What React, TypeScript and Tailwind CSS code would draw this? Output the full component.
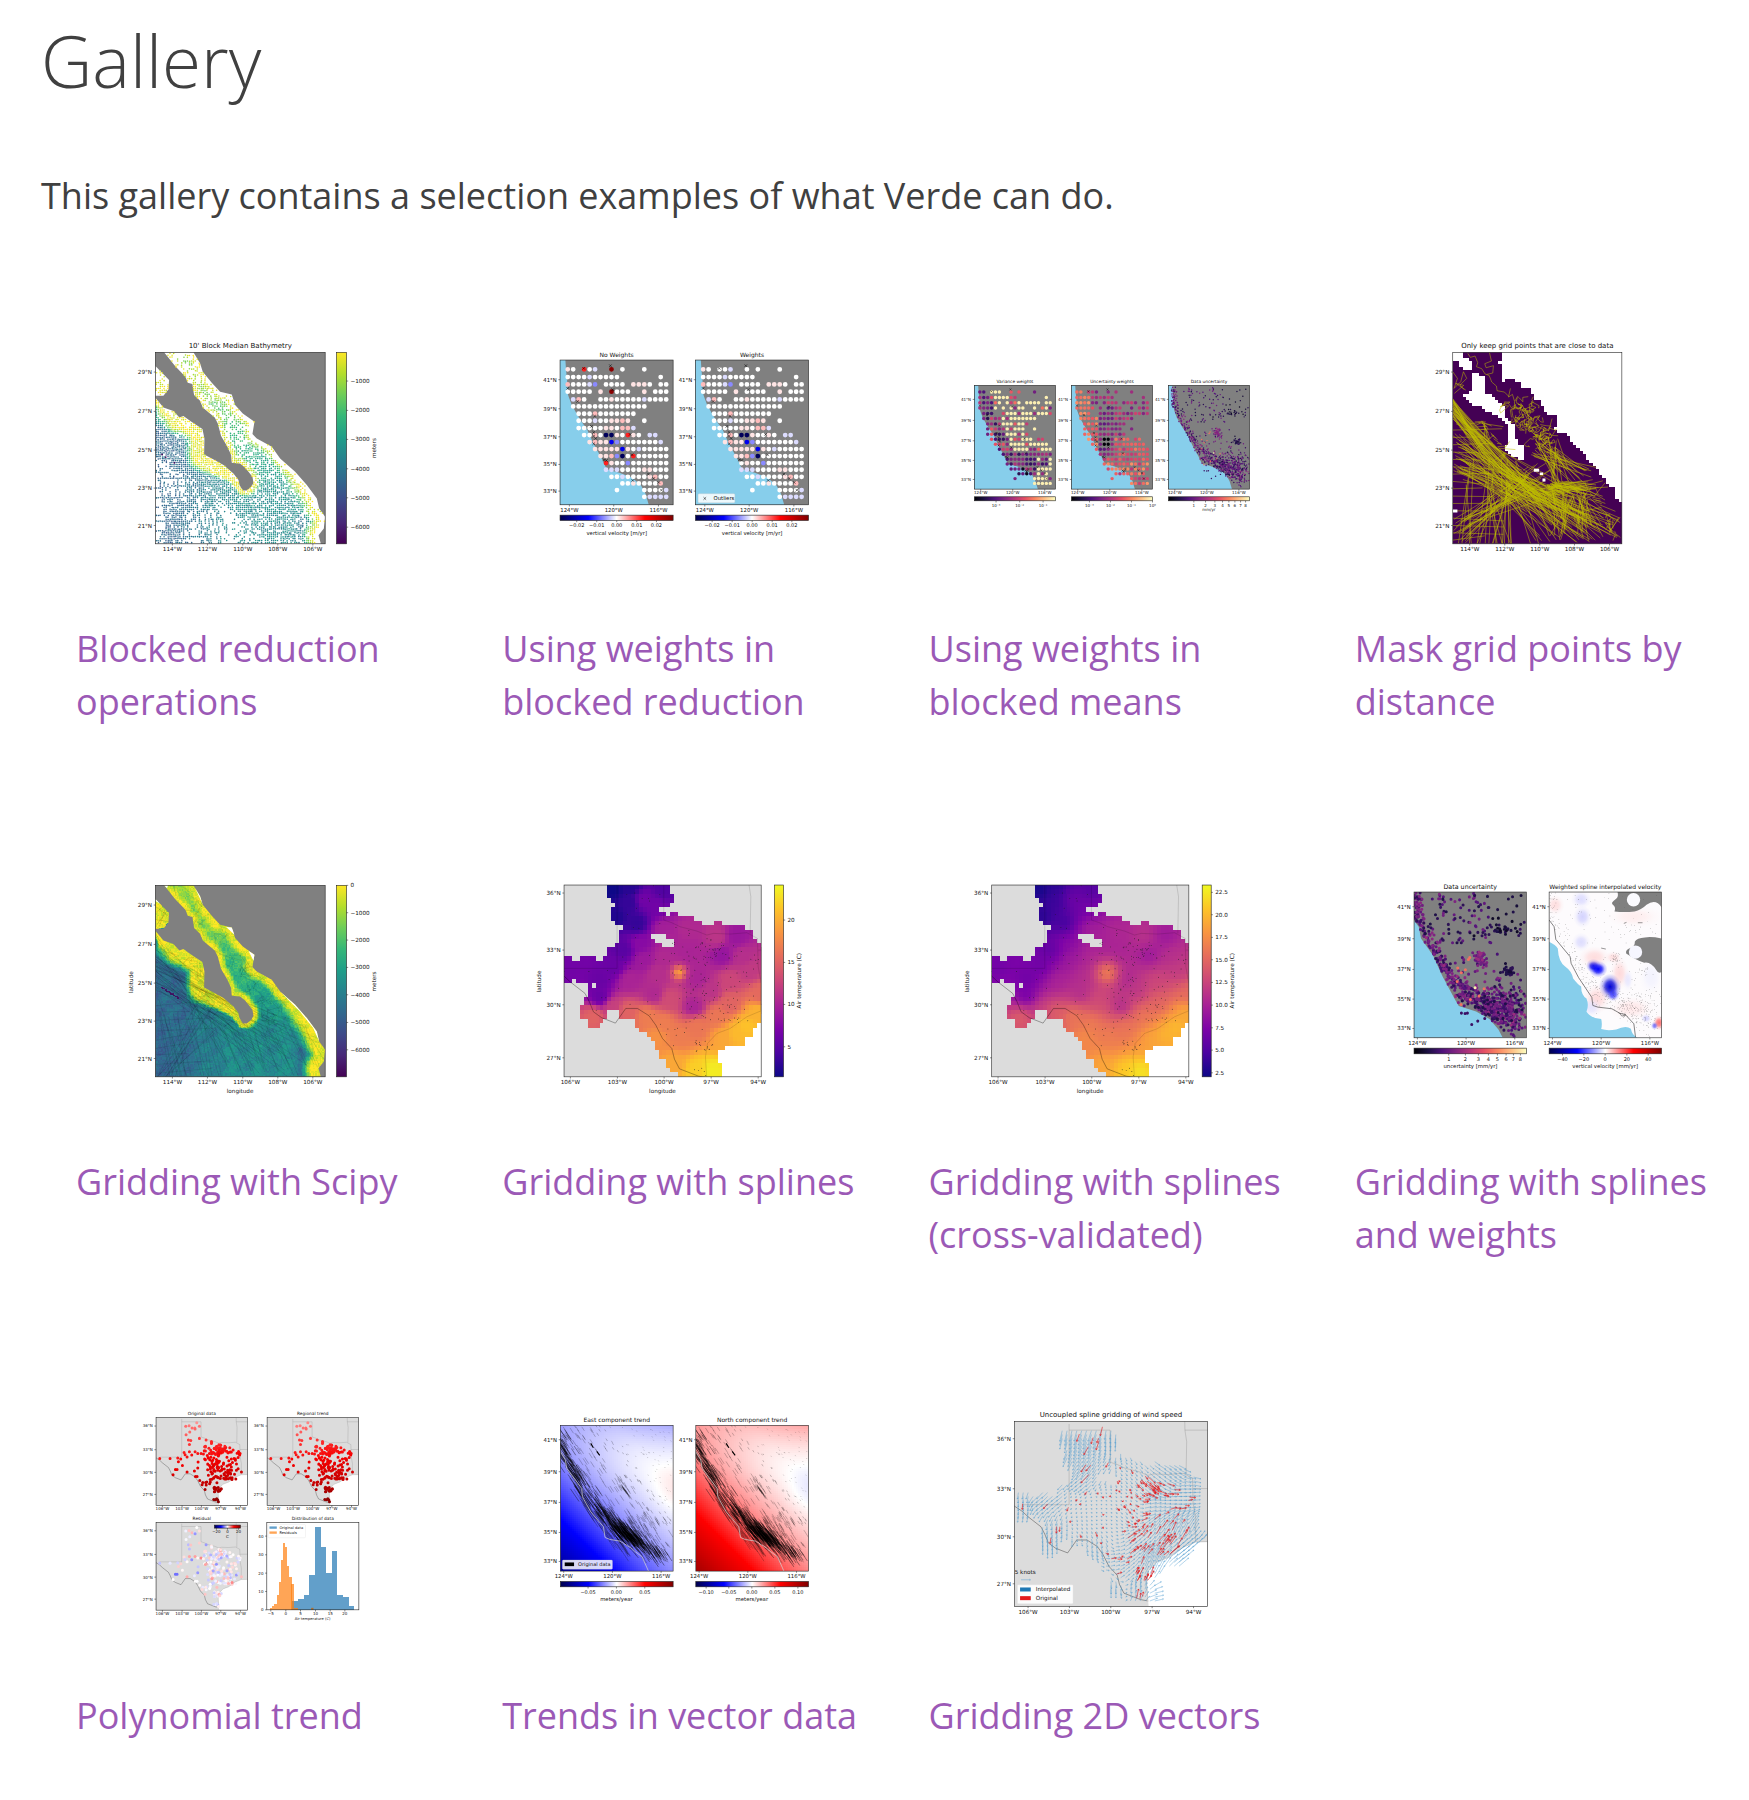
import React from "react";

type Pt = [number, number];
type Stop = [number, number, number];

/* ---------- numeric helpers ---------- */

function rng(seed: number) {
  let s = seed;
  return () => {
    s = (s + 0x6d2b79f5) | 0;
    let t = Math.imul(s ^ (s >>> 15), 1 | s);
    t = (t + Math.imul(t ^ (t >>> 7), 61 | t)) ^ t;
    return ((t ^ (t >>> 14)) >>> 0) / 4294967296;
  };
}

function gauss(r: () => number) {
  return Math.sqrt(-2 * Math.log(r() + 1e-9)) * Math.cos(6.2832 * r());
}

const VIRIDIS: Stop[] = [[68, 1, 84], [72, 40, 120], [62, 74, 137], [49, 104, 142], [38, 130, 142], [31, 158, 137], [53, 183, 121], [109, 205, 89], [180, 222, 44], [253, 231, 37]];
const MAGMA: Stop[] = [[0, 0, 4], [28, 16, 68], [79, 18, 123], [129, 37, 129], [181, 54, 122], [229, 80, 100], [251, 135, 97], [254, 194, 135], [252, 253, 191]];
const PLASMA: Stop[] = [[13, 8, 135], [75, 3, 161], [125, 3, 168], [168, 34, 150], [203, 70, 121], [229, 107, 93], [248, 148, 65], [253, 195, 40], [240, 249, 33]];
const SEISMIC: Stop[] = [[0, 0, 76], [0, 0, 255], [255, 255, 255], [255, 0, 0], [128, 0, 0]];

function color(map: Stop[], value: number) {
  const v = Math.max(0, Math.min(0.9999, value)) * (map.length - 1);
  const i = Math.floor(v);
  const f = v - i;
  const c = map[i].map((a, k) => Math.round(a + (map[i + 1][k] - a) * f));
  return `rgb(${c[0]},${c[1]},${c[2]})`;
}

function inside(x: number, y: number, poly: Pt[]) {
  let hit = false;
  for (let i = 0, j = poly.length - 1; i < poly.length; j = i++) {
    const [xi, yi] = poly[i];
    const [xj, yj] = poly[j];
    if (yi > y !== yj > y && x < ((xj - xi) * (y - yi)) / (yj - yi) + xi) hit = !hit;
  }
  return hit;
}

function lineDist(x: number, y: number, line: Pt[]) {
  let best = 1e9;
  for (let i = 1; i < line.length; i++) {
    const [ax, ay] = line[i - 1];
    const [bx, by] = line[i];
    const l = (bx - ax) ** 2 + (by - ay) ** 2;
    const t = Math.max(0, Math.min(1, ((x - ax) * (bx - ax) + (y - ay) * (by - ay)) / l));
    best = Math.min(best, Math.hypot(x - ax - t * (bx - ax), y - ay - t * (by - ay)));
  }
  return best;
}

function along(line: Pt[], t: number): Pt {
  const v = Math.min(0.9999, Math.max(0, t)) * (line.length - 1);
  const i = Math.floor(v);
  const f = v - i;
  return [line[i][0] + (line[i + 1][0] - line[i][0]) * f, line[i][1] + (line[i + 1][1] - line[i][1]) * f];
}

const pts = (p: Pt[]) => p.map((q) => q.join(",")).join(" ");
const n1 = (v: number) => v.toFixed(1);

/* ---------- drawing primitives ---------- */

type Layer = Record<string, string>;

function addCell(layer: Layer, fill: string, x: number, y: number, w: number, h: number) {
  layer[fill] = (layer[fill] || "") + `M${n1(x)} ${n1(y)}h${n1(w)}v${n1(h)}h${n1(-w)}z`;
}

function addDot(layer: Layer, fill: string, x: number, y: number, r: number) {
  layer[fill] = (layer[fill] || "") + `M${n1(x - r)} ${n1(y)}a${r} ${r} 0 1 0 ${2 * r} 0a${r} ${r} 0 1 0 ${-2 * r} 0z`;
}

function Cells({ layer, crisp }: { layer: Layer; crisp?: boolean }) {
  return (
    <g shapeRendering={crisp ? "crispEdges" : undefined}>
      {Object.entries(layer).map(([fill, d]) => (
        <path key={fill} d={d} fill={fill} />
      ))}
    </g>
  );
}

function Label({ x, y, size, children, anchor = "middle", turn }: { x: number; y: number; size: number; children: React.ReactNode; anchor?: "middle" | "start" | "end"; turn?: boolean }) {
  return (
    <text x={x} y={y} fontSize={size} textAnchor={anchor} fill="#111" fontFamily="DejaVu Sans, sans-serif" transform={turn ? `rotate(-90 ${x} ${y})` : undefined}>
      {children}
    </text>
  );
}

type Tick = [number, string];
type Box = [number, number, number, number];

function Axes({ box, xt, yt, size, title, titleSize = 21, right, tickGap }: { box: Box; xt?: Tick[]; yt?: Tick[]; size: number; title?: string; titleSize?: number; right?: boolean; tickGap?: number }) {
  const [x0, y0, x1, y1] = box;
  const gap = tickGap ?? 6;
  return (
    <g>
      <rect x={x0} y={y0} width={x1 - x0} height={y1 - y0} fill="none" stroke="#222" strokeWidth={1.8} />
      {title && <Label x={(x0 + x1) / 2} y={y0 - (titleSize > 20 ? 12 : titleSize > 15 ? 9 : 7)} size={titleSize}>{title}</Label>}
      {xt?.map(([p, t]) => (
        <g key={t}>
          <path d={`M${p} ${y1}v5`} stroke="#222" strokeWidth={1.6} />
          <Label x={p} y={y1 + gap + size} size={size}>{t}</Label>
        </g>
      ))}
      {yt?.map(([p, t]) => (
        <g key={t}>
          <path d={right ? `M${x1} ${p}h5` : `M${x0} ${p}h-5`} stroke="#222" strokeWidth={1.6} />
          <Label x={right ? x1 + 12 : x0 - 10} y={p + size * 0.36} size={size} anchor={right ? "start" : "end"}>{t}</Label>
        </g>
      ))}
    </g>
  );
}

function Bar({ id, map, box, vertical }: { id: string; map: Stop[]; box: Box; vertical?: boolean }) {
  const [x0, y0, x1, y1] = box;
  return (
    <g>
      <defs>
        <linearGradient id={id} x1="0" y1={vertical ? "1" : "0"} x2={vertical ? "0" : "1"} y2="0">
          {map.map((c, i) => (
            <stop key={i} offset={i / (map.length - 1)} stopColor={`rgb(${c.join(",")})`} />
          ))}
        </linearGradient>
      </defs>
      <rect x={x0} y={y0} width={x1 - x0} height={y1 - y0} fill={`url(#${id})`} />
    </g>
  );
}

function Figure({ name, x, y, children }: { name: string; x: number; y: number; children: React.ReactNode }) {
  return (
    <svg role="img" aria-label={name} viewBox={`${x} ${y} 1068 840`} className="block w-full">
      {children}
    </svg>
  );
}

function Clip({ id, box, children }: { id: string; box: Box; children: React.ReactNode }) {
  return (
    <g>
      <clipPath id={id}>
        <rect x={box[0]} y={box[1]} width={box[2] - box[0]} height={box[3] - box[1]} />
      </clipPath>
      <g clipPath={`url(#${id})`}>{children}</g>
    </g>
  );
}

/* ---------- Baja California ---------- */

const BAY: Pt[] = [[106, 108], [120, 122], [147, 150], [145, 178], [130, 197], [106, 197]];
const PACIFIC: Pt[] = [[106, 203], [130, 232], [160, 243], [178, 262], [190, 258], [215, 276], [247, 297], [253, 325], [252, 373], [275, 385], [310, 405], [340, 430], [355, 450], [358, 465], [368, 481], [380, 481]];
const GULF: Pt[] = [[380, 481], [394, 470], [400, 458], [397, 440], [375, 412], [360, 400], [335, 398], [333, 375], [322, 350], [303, 318], [293, 280], [284, 262], [248, 232], [240, 212], [222, 195], [217, 162], [203, 158], [196, 140], [165, 108], [132, 67]];
const MAINLAND: Pt[] = [[220, 67], [240, 100], [248, 125], [275, 158], [300, 185], [335, 193], [345, 225], [368, 250], [403, 275], [397, 312], [410, 325], [455, 350], [480, 385], [525, 425], [560, 465], [590, 505], [597, 535], [615, 560], [611, 595], [595, 615], [602, 641]];
const SEA: Pt[] = [...PACIFIC, ...GULF, ...MAINLAND, [106, 641]];

const step = (v: number) => {
  const t = Math.max(0, Math.min(1, v));
  return t * t * (3 - 2 * t);
};

function depth(x: number, y: number) {
  if (inside(x, y, BAY)) return 0.95;
  const dp = lineDist(x, y, PACIFIC);
  const dg = lineDist(x, y, GULF);
  const dm = lineDist(x, y, MAINLAND);
  const wp = 12 + 28 * step((y - 225) / 70) * (1 - step((y - 415) / 70));
  const wm = 22 + 20 * step((y - 400) / 100);
  const side = step(((x - 106) * 1.28 + 150 - y) / 40);
  const gulf = side * Math.max(0, Math.min(1, (500 - y) / 330));
  let base = 0.48 + gulf * 0.34;
  base -= 0.14 * step((360 - x) / 220) * step((y - 210) / 90) * (1 - side * step((480 - y) / 60));
  base -= 0.15 * step((x - 522) / 30) * step((y - 535) / 30);
  const s = Math.max(1 - step((dp - wp * 0.8) / (wp * 0.8)), 1 - step((dg - 6) / 20), 1 - step((dm - wm * 0.5) / wm));
  return base + (0.96 - base) * s;
}

const TRACKS: [Pt, Pt][] = (() => {
  const r = rng(11);
  const out: [Pt, Pt][] = [];
  for (let i = 0; i < 42; i++) out.push([[106, 205 + r() * 180], [300 + r() * 310, 470 + r() * 171]]);
  for (let i = 0; i < 16; i++) {
    const x = 106 + r() * 160;
    out.push([[x, 400 + r() * 90], [x + 20 + r() * 50, 641]]);
  }
  for (let i = 0; i < 9; i++) {
    const y = 420 + i * 25;
    out.push([[106, y + r() * 14], [190 + r() * 120, y + r() * 10 - 8]]);
  }
  for (let i = 0; i < 10; i++) out.push([[106 + r() * 60, 641], [210 + r() * 80, 420 + r() * 90]]);
  return out;
})();

const BLOCK_DOTS: Layer = (() => {
  const r = rng(3);
  const out: Layer = {};
  for (let j = 0; j < 98; j++)
    for (let i = 0; i < 87; i++) {
      const x = 109 + i * 5.85 + (r() - 0.5) * 1.6;
      const y = 70 + j * 5.85 + (r() - 0.5) * 1.6;
      const bay = inside(x, y, BAY);
      if (y > 639 || (!bay && !inside(x, y, SEA))) continue;
      const dm = lineDist(x, y, MAINLAND);
      let keep = 0.76;
      if (y < 160) keep = 0.34;
      else if (dm < 13) keep = 0.1;
      else if (y < 340 && x > 240) keep = 0.6;
      const west = step((440 - x) / 140) * step((y - (x - 106) * 1.28 - 110) / 40);
      if (west > 0) {
        const shelf = lineDist(x, y, PACIFIC) < 62;
        const near = TRACKS.some((t) => lineDist(x, y, t) < 2.6);
        const low = shelf ? 0.62 : 0.45 * (1 - step((y + (300 - x) * 0.4 - 420) / 120));
        keep = keep * (1 - west) + west * (near ? 0.96 : low);
      }
      if (bay) keep = 0.5;
      if (r() > keep) continue;
      const v = Math.round((depth(x, y) + (r() - 0.5) * 0.12) * 24) / 24;
      addDot(out, color(VIRIDIS, v), x, y, 2.4);
    }
  for (const [x, y] of [[126, 373], [137, 381], [163, 398]] as Pt[]) addDot(out, "#440154", x, y, 2.6);
  return out;
})();

const DEPTH_CELLS: Layer = (() => {
  const r = rng(8);
  const out: Layer = {};
  for (let y = 67; y < 641; y += 4)
    for (let x = 106; x < 615; x += 4) {
      let v = depth(x + 2, y + 2) + (r() - 0.5) * 0.09;
      v += 0.04 * Math.sin(x / 13 + y / 21) * Math.sin(y / 17);
      if (Math.abs(y - 372 - (x - 124) * 0.62) < 3 && x > 120 && x < 175) v = 0.06;
      addCell(out, color(VIRIDIS, Math.round(v * 30) / 30), x, y, 4, 4);
    }
  return out;
})();

function zigzags(seed: number, count: number) {
  const r = rng(seed);
  let d = "";
  for (let i = 0; i < count; i++) {
    const t = r() * 0.72;
    const g = along([[190, 80], [215, 150], [285, 220], [340, 290], [380, 350], [420, 420], [480, 480], [540, 520], [570, 600]], t);
    let x = g[0] + gauss(r) * 16;
    let y = g[1] + gauss(r) * 12;
    d += `M${n1(x)} ${n1(y)}`;
    for (let k = 0; k < 5; k++) {
      x += gauss(r) * 16 + 5;
      y += gauss(r) * 14 + 6;
      d += `L${n1(x)} ${n1(y)}`;
    }
  }
  return d;
}

const trackPath = TRACKS.map(([a, b]) => `M${n1(a[0])} ${n1(a[1])}L${n1(b[0])} ${n1(b[1])}`).join("");
const surveyPath = (() => {
  const r = rng(77);
  let d = "";
  for (let i = 0; i < 34; i++) {
    const a = along([[180, 250], [240, 330], [270, 410], [360, 490]], r());
    d += `M${n1(a[0] + gauss(r) * 12)} ${n1(a[1])}l${n1(gauss(r) * 22)} ${n1(gauss(r) * 18)}l${n1(gauss(r) * 22)} ${n1(gauss(r) * 18)}`;
  }
  for (let i = 0; i < 26; i++) {
    const a: Pt = [280 + i * 11, 470 + r() * 30];
    d += `M${n1(a[0])} ${n1(a[1])}L${n1(a[0] + 30 + r() * 50)} ${n1(600 + r() * 40)}`;
  }
  return d;
})();

const BAJA_X: Tick[] = [[157, "114°W"], [262, "112°W"], [368, "110°W"], [473, "108°W"], [578, "106°W"]];

function BlockedReduction() {
  const box: Box = [106, 67, 615, 641];
  return (
    <Figure name="Blocked median bathymetry" x={-132} y={-60}>
      <rect x={106} y={67} width={509} height={574} fill="#808080" />
      <polygon points={pts(BAY)} fill="#fff" />
      <polygon points={pts(SEA)} fill="#fff" />
      <Cells layer={BLOCK_DOTS} />
      <Axes box={box} size={17} title="10' Block Median Bathymetry" xt={BAJA_X} yt={[[126, "29°N"], [244, "27°N"], [360, "25°N"], [474, "23°N"], [586, "21°N"]]} />
      <Bar id="bar-block" map={VIRIDIS} box={[649, 67, 679, 641]} vertical />
      <Axes box={[649, 67, 679, 641]} size={17} right yt={[[153, "−1000"], [241, "−2000"], [328, "−3000"], [416, "−4000"], [503, "−5000"], [591, "−6000"]]} />
      <Label x={768} y={354} size={17} turn>meters</Label>
    </Figure>
  );
}

function GriddingScipy() {
  const box: Box = [106, 46, 615, 620];
  return (
    <Figure name="Gridded bathymetry" x={-132} y={-81}>
      <defs>
        <clipPath id="scipy-sea">
          <polygon points={pts(SEA)} />
          <polygon points={pts(BAY)} />
        </clipPath>
      </defs>
      <g transform="translate(0 -21)">
        <rect x={106} y={67} width={509} height={574} fill="#808080" />
        <g clipPath="url(#scipy-sea)">
          <Cells layer={DEPTH_CELLS} crisp />
          <path d={trackPath + surveyPath + zigzags(5, 34)} fill="none" stroke="#000" strokeOpacity={0.28} strokeWidth={1} />
          <path d="M106 130l40 30M106 150l30-25M110 185l30-40M118 190l20-60M106 170l40 5" stroke="#000" strokeOpacity={0.4} fill="none" />
        </g>
        <path d="M220 67l20 33 8 25-9-20-14-30z M318 192l17 1 8 22z M385 263l18 12-3 18z M480 385l45 40 35 40 30 40 7 30-18-40-40-50z M132 67l9 9 3-9z M106 108l14 14-14-8z" fill="#fff" />
      </g>
      <Axes box={box} size={17} xt={BAJA_X} yt={[[105, "29°N"], [223, "27°N"], [339, "25°N"], [453, "23°N"], [565, "21°N"]]} />
      <Label x={360} y={669} size={17}>longitude</Label>
      <Label x={38} y={336} size={17} turn>latitude</Label>
      <Bar id="bar-scipy" map={VIRIDIS} box={[649, 46, 679, 620]} vertical />
      <Axes box={[649, 46, 679, 620]} size={17} right yt={[[46, "0"], [128, "−1000"], [210, "−2000"], [292, "−3000"], [374, "−4000"], [457, "−5000"], [539, "−6000"]]} />
      <Label x={768} y={334} size={17} turn>meters</Label>
    </Figure>
  );
}

const MASK_NE: Pt[] = [[232, 60], [242, 75], [242, 92], [234, 98], [242, 118], [242, 155], [252, 155], [255, 146], [274, 146], [278, 155], [296, 157], [298, 175], [328, 177], [340, 205], [352, 212], [372, 248], [410, 262], [408, 284], [392, 292], [394, 302], [430, 312], [465, 345], [490, 370], [505, 395], [540, 432], [560, 462], [583, 475], [585, 505], [602, 520], [610, 520], [610, 60]];
const MASK_BAJA: Pt[] = [[90, 60], [130, 60], [128, 80], [150, 98], [156, 125], [188, 142], [196, 190], [214, 196], [244, 225], [256, 262], [282, 292], [286, 340], [310, 352], [312, 387], [272, 384], [266, 370], [252, 358], [262, 335], [256, 300], [258, 288], [232, 262], [190, 238], [152, 222], [134, 208], [128, 195], [152, 186], [155, 126], [120, 116], [112, 96], [90, 96]];

const MASK_CELLS: Layer = (() => {
  const out: Layer = {};
  for (let y = 67; y < 641; y += 8.97)
    for (let x = 95; x < 601; x += 9.75) {
      const cx = x + 4.9;
      const cy = y + 4.5;
      if (!inside(cx, cy, MASK_NE) && !inside(cx, cy, MASK_BAJA)) addCell(out, "#440154", x, y, 9.8, 9);
    }
  return out;
})();

const MASK_LINES = (() => {
  const r = rng(42);
  let d = "";
  const go = (a: Pt, b: Pt) => {
    d += `M${n1(a[0])} ${n1(a[1])}L${n1(b[0])} ${n1(b[1])}`;
  };
  for (let i = 0; i < 34; i++) {
    const s = 205 + r() * 60;
    const m: Pt = [185 + r() * 50, 325 + r() * 80];
    d += `M95 ${n1(s)}L${n1(m[0])} ${n1(m[1])}Q${n1(m[0] + 70)} ${n1(m[1] + 75)} ${n1(340 + r() * 60)} ${n1(475 + r() * 65)}`;
  }
  for (let i = 0; i < 55; i++) go([95 + r() * 40, 230 + r() * 220], [300 + r() * 300, 490 + r() * 150]);
  for (let i = 0; i < 24; i++) {
    const x = 95 + r() * 220;
    go([x, 380 + r() * 130], [x + gauss(r) * 35, 641]);
  }
  for (let i = 0; i < 16; i++) {
    const y = 300 + i * 22;
    go([95, y], [180 + r() * 70, y - 15 + r() * 24]);
  }
  for (let i = 0; i < 24; i++) go([95 + r() * 60, 560 + r() * 80], [210 + r() * 180, 400 + r() * 110]);
  for (let i = 0; i < 80; i++) {
    const a = along([[350, 485], [410, 458], [470, 475]], r());
    go([a[0], a[1] + gauss(r) * 9], [a[0] + 45 + gauss(r) * 26, a[1] + 10 + gauss(r) * 14]);
  }
  for (let i = 0; i < 60; i++) go([300 + r() * 200, 470 + r() * 40], [380 + r() * 215, 560 + r() * 75]);
  for (let i = 0; i < 36; i++) go([330 + r() * 80, 320 + r() * 60], [390 + r() * 140, 410 + r() * 60]);
  for (let i = 0; i < 34; i++) {
    const a = along([[180, 270], [230, 340], [310, 430]], r());
    go([a[0] + gauss(r) * 8, a[1]], [a[0] + gauss(r) * 30, a[1] + 10 + gauss(r) * 20]);
  }
  for (let i = 0; i < 30; i++) {
    const a = along([[500, 470], [550, 550], [585, 625]], r());
    go([a[0] + gauss(r) * 10, a[1]], [a[0] + gauss(r) * 22, Math.min(640, a[1] + gauss(r) * 24)]);
  }
  for (let i = 0; i < 46; i++) {
    const a = along([[262, 205], [320, 265], [385, 345]], r());
    let x = a[0] + gauss(r) * 9;
    let y = a[1] + gauss(r) * 9;
    d += `M${n1(x)} ${n1(y)}`;
    for (let k = 0; k < 6; k++) {
      x += gauss(r) * 10 + 1;
      y += gauss(r) * 10 + 1;
      d += `L${n1(x)} ${n1(y)}`;
    }
  }
  return d + "M140 70l8 12 14-4 8 20-4 12 16 6 10 16 12 4 8 20 14 12 2 14 22 4 14 14M205 67l6 26-20 8 4 12 22-6-2 22-18 4M95 125l14 20-10 30 20-20 8-30 10 20-20 20 12 14M100 190l28-24-24-6 30 20M268 175l-6 26 12-8 6 20";
})();

function MaskDistance() {
  const box: Box = [95, 67, 602, 641];
  return (
    <Figure name="Grid points masked by distance" x={-198} y={-60}>
      <Clip id="mask-clip" box={box}>
        <Cells layer={MASK_CELLS} crisp />
        <path d={MASK_LINES} fill="none" stroke="#bfbf00" strokeOpacity={0.8} strokeWidth={1.9} />
        <path d="M338 416h16v9h-16zM356 427h10v8h-10zM364 445h9v9h-9zM95 538h14v9h-14z" fill="#fff" />
      </Clip>
      <Axes box={box} size={17} title="Only keep grid points that are close to data" xt={[[146, "114°W"], [251, "112°W"], [356, "110°W"], [460, "108°W"], [565, "106°W"]]} yt={[[126, "29°N"], [244, "27°N"], [360, "25°N"], [474, "23°N"], [586, "21°N"]]} />
    </Figure>
  );
}

/* ---------- California ---------- */

const OCEAN: Pt[] = [[90, 90], [106, 90], [108, 120], [111, 150], [114, 195], [125, 225], [150, 268], [172, 300], [190, 340], [215, 385], [230, 418], [268, 428], [305, 442], [332, 465], [346, 490], [356, 524], [90, 524]];
const ROW_Y = [118, 141, 163, 185, 208, 229, 251, 272, 294, 315, 336, 357, 378, 399, 419, 440, 460, 480, 500];
const ROWS = [
  "pw.rwb..R.w...w....",
  "wwwwbwwwww.......w.",
  "PwwwbB.wwww.pppw.ww",
  "wwwww.p.Rwww..p.www",
  ".bPw..wwpwwwwwbwwww",
  ".wwwwwwwwwwwwww....",
  "..wwwPwwwwwww......",
  "..wwwbwwppPp..w....",
  "..wwwwwppwPPb......",
  "...wwPwnnpwrpw.bb..",
  "....pPppNBwwwwwwwb.",
  ".....pppppNpwbwwwww",
  "......ppPBnwrwwwwww",
  ".......rpwwBwwwwwww",
  ".......bbbwwwwppwww",
  "........wwbwwwwpPww",
  "..........wwpwwwwP.",
  ".........w....wwwwb",
  "..............wbbbb",
];
const DOT_FILL: Record<string, string> = { w: "#fff", p: "#ffe4e4", P: "#ffbcbc", r: "#ff2020", R: "#8b0000", b: "#dcdcff", B: "#8a8aff", N: "#0000f0", n: "#00005a" };
const OUTLIERS: Pt[] = [[241, 107], [161, 115], [113, 175], [248, 179], [143, 214], [194, 258], [184, 289], [191, 307], [191, 318], [197, 325], [191, 341], [222, 389], [229, 391], [300, 313], [306, 374], [308, 451], [355, 432], [371, 445], [386, 457], [394, 480]];

function velocityDots(weighted: boolean) {
  const out: Layer = {};
  ROWS.forEach((row, j) => {
    [...row].forEach((c, i) => {
      if (c === ".") return;
      let k = c;
      if (weighted && (c === "r" || c === "R")) k = "w";
      addDot(out, DOT_FILL[k], 113 + i * 16.4, ROW_Y[j], 7.2);
    });
  });
  return out;
}
const DOTS_PLAIN = velocityDots(false);
const DOTS_WEIGHTED = velocityDots(true);
const CROSSES = OUTLIERS.map(([x, y]) => `M${x - 4} ${y - 4}l8 8m0-8l-8 8`).join("");

function VelocityPanel({ layer, id, title, legend }: { layer: Layer; id: string; title: string; legend?: boolean }) {
  const bar: Box = [90, 555, 429, 571];
  return (
    <g>
      <rect x={90} y={90} width={339} height={434} fill="#808080" />
      <polygon points={pts(OCEAN)} fill="#87ceeb" />
      <Cells layer={layer} />
      <path d={CROSSES} stroke="#000" strokeWidth={1.5} />
      {legend && (
        <g>
          <rect x={98} y={491} width={110} height={27} rx={3} fill="#fff" fillOpacity={0.85} stroke="#ccc" />
          <path d="M114 501l8 8m0-8l-8 8" stroke="#000" strokeWidth={1.6} />
          <Label x={144} y={511} size={16} anchor="start">Outliers</Label>
        </g>
      )}
      <Axes box={[90, 90, 429, 524]} size={16} title={title} titleSize={18} xt={[[118, "124°W"], [251, "120°W"], [385, "116°W"]]} yt={[[149, "41°N"], [236, "39°N"], [320, "37°N"], [403, "35°N"], [483, "33°N"]]} />
      <Bar id={id} map={SEISMIC} box={bar} />
      <Axes box={bar} size={15} xt={[[140, "−0.02"], [200, "−0.01"], [260, "0.00"], [320, "0.01"], [379, "0.02"]]} />
      <Label x={260} y={614} size={16}>vertical velocity [m/yr]</Label>
    </g>
  );
}

function WeightsReduction() {
  return (
    <Figure name="Vertical velocity with and without weights" x={-84} y={-60}>
      <VelocityPanel layer={DOTS_PLAIN} id="bar-plain" title="No Weights" />
      <g transform="translate(406 0)">
        <VelocityPanel layer={DOTS_WEIGHTED} id="bar-weighted" title="Weights" legend />
      </g>
    </Figure>
  );
}

const FAULT: Pt[] = [[73, 70], [78, 135], [100, 195], [135, 250], [165, 300], [205, 355], [250, 390], [300, 415], [345, 430], [388, 478]];
const COAST: Pt[] = [[60, 66], [67, 150], [83, 170], [90, 205], [125, 255], [155, 320], [190, 385], [203, 408], [255, 424], [295, 447], [322, 478], [335, 503], [60, 503]];

const STATIONS: [number, number, number][] = (() => {
  const r = rng(21);
  const out: [number, number, number][] = [];
  const add = (x: number, y: number, v: number) => {
    if (x > 70 && x < 405 && y > 68 && y < 501 && !inside(x - 3, y + 2, COAST)) out.push([x, y, v]);
  };
  for (let i = 0; i < 480; i++) {
    const p = along(FAULT, r());
    add(p[0] + gauss(r) * 10, p[1] + gauss(r) * 18, 0.15 + r() * 0.28);
  }
  for (let i = 0; i < 330; i++) add(325 + gauss(r) * 48, 415 + gauss(r) * 32, 0.13 + r() * 0.24);
  for (let i = 0; i < 45; i++) add(267 + gauss(r) * 11, 264 + gauss(r) * 11, 0.3 + r() * 0.15);
  for (let i = 0; i < 30; i++) add(352 + gauss(r) * 10, 303 + gauss(r) * 7, 0.1 + r() * 0.08);
  for (let i = 0; i < 90; i++) add(75 + r() * 230, 70 + r() * 150, 0.12 + r() * 0.24);
  for (let i = 0; i < 26; i++) add(240 + r() * 165, 70 + r() * 130, 0.06 + r() * 0.12);
  for (let i = 0; i < 20; i++) add(310 + r() * 85, 180 + gauss(r) * 5, 0.08 + r() * 0.12);
  for (let i = 0; i < 60; i++) add(180 + r() * 220, 250 + r() * 180, 0.2 + r() * 0.2);
  for (const [x, y] of [[200, 294], [211, 308], [223, 299], [232, 268], [236, 262], [198, 334], [264, 378], [238, 388], [210, 403], [279, 356]] as Pt[]) out.push([x, y, 0.7]);
  for (const [x, y] of [[211, 429], [222, 430], [229, 429], [242, 463], [260, 453], [281, 445]] as Pt[]) out.push([x, y, 0.2]);
  out.push([252, 353, 0.97]);
  return out;
})();

function stationLayer(f: (x: number, y: number) => Pt, radius: number) {
  const out: Layer = {};
  for (const [x, y, v] of STATIONS) {
    const [a, b] = f(x, y);
    addDot(out, color(MAGMA, Math.round(v * 30) / 30), a, b, radius);
  }
  return out;
}
const STATIONS_SMALL = stationLayer((x, y) => [48 + ((x - 69) * 235) / 337, 80 + ((y - 66) * 303) / 437], 2.2);
const STATIONS_BIG = stationLayer((x, y) => [x, y], 4.6);

function weightDots(kind: number) {
  const r = rng(60 + kind);
  const out: Layer = {};
  ROWS.forEach((row, j) => {
    [...row].forEach((c, i) => {
      if (c === ".") return;
      let v: number;
      if (kind === 0) {
        const coast = i - j * 0.45 < 2.5;
        v = j > 11 && j < 17 ? 0.15 + r() * 0.35 : coast ? 0.15 + r() * 0.5 : r() < 0.68 ? 0.97 : 0.3 + r() * 0.4;
        if (j > 14 && r() < 0.2) v = 0.05;
        if (j > 9 && i > 14 && r() < 0.6) v = 0.97;
      } else {
        v = i - j * 0.45 < 3 ? 0.6 + r() * 0.18 : j < 9 ? 0.35 + r() * 0.22 : 0.5 + r() * 0.22;
        if (i > 5 && i < 10 && j > 2) v = 0.28 + r() * 0.2;
        if (i > 6 && i < 9 && j > 8 && j < 11) v = 0.01;
        if (j > 12) v = 0.5 + r() * 0.28;
      }
      addDot(out, color(MAGMA, v), 40 + ((113 + i * 16.4 - 90) * 243) / 340, 76 + ((ROW_Y[j] - 90) * 311) / 434, 5.2);
    });
  });
  return out;
}
const VARIANCE = weightDots(0);
const UNCERTAINTY = weightDots(1);
const MINI_CROSSES = OUTLIERS.concat([[245, 350], [312, 448], [316, 440], [304, 446]]).map(([x, y]) => `M${n1(37 + (x - 90) * 0.715)} ${n1(73 + (y - 90) * 0.717)}l6 6m0-6l-6 6`).join("");
const MINI_OCEAN: Pt[] = OCEAN.map(([x, y]) => [40 + ((x - 90) * 243) / 340, 76 + ((y - 90) * 311) / 434]);

function MeanPanel({ title, id, ticks, children }: { title: string; id: string; ticks: Tick[]; children: React.ReactNode }) {
  return (
    <g>
      <rect x={40} y={76} width={243} height={311} fill="#808080" />
      <polygon points={pts(MINI_OCEAN)} fill="#87ceeb" />
      {children}
      <Axes box={[40, 76, 283, 387]} size={12} tickGap={4} title={title} titleSize={13} xt={[[59, "124°W"], [155, "120°W"], [251, "116°W"]]} yt={[[118, "41°N"], [181, "39°N"], [242, "37°N"], [301, "35°N"], [358, "33°N"]]} />
      <Bar id={id} map={MAGMA} box={[40, 410, 283, 422]} />
      <Axes box={[40, 410, 283, 422]} size={12} xt={ticks} />
    </g>
  );
}

function WeightsMeans() {
  return (
    <Figure name="Blocked mean weights" x={-96} y={-150}>
      <MeanPanel title="Variance weights" id="bar-var" ticks={[[105, "10⁻³"], [176, "10⁻²"], [246, "10⁻¹"]]}>
        <Cells layer={VARIANCE} />
        <path d={MINI_CROSSES} stroke="#000" strokeWidth={1.2} />
      </MeanPanel>
      <g transform="translate(291 0)">
        <MeanPanel title="Uncertainty weights" id="bar-unc" ticks={[[94, "10⁻³"], [157, "10⁻²"], [220, "10⁻¹"], [283, "10⁰"]]}>
          <Cells layer={UNCERTAINTY} />
          <path d={MINI_CROSSES} stroke="#000" strokeWidth={1.2} />
        </MeanPanel>
      </g>
      <g transform="translate(582 0)">
        <MeanPanel title="Data uncertainty" id="bar-mean" ticks={[[116, "1"], [151, "2"], [179, "3"], [202, "4"], [221, "5"], [239, "6"], [256, "7"], [271, "8"]]}>
          <Cells layer={STATIONS_SMALL} />
        </MeanPanel>
        <Label x={161} y={454} size={12}>mm/yr</Label>
      </g>
    </Figure>
  );
}

const SPECKS = (() => {
  const r = rng(9);
  const out: Layer = {};
  for (const [x, y] of STATIONS) if (r() < 0.6) addCell(out, "#555", x + 405, y, 1.4, 1.4);
  return out;
})();

const BLOBS: [number, number, number, number, string, number][] = [
  [607, 287, 16, 15, "#0000e8", 1], [621, 297, 20, 18, "#0000ff", 1], [657, 350, 24, 28, "#0000d8", 1], [666, 374, 14, 14, "#3030ff", 0.8],
  [570, 88, 22, 20, "#c8c8ff", 0.6], [574, 140, 20, 24, "#b8b8ff", 0.6], [570, 216, 20, 20, "#c8c8ff", 0.6], [492, 105, 20, 22, "#ffc0c0", 0.5],
  [617, 385, 30, 32, "#ffb8b8", 0.5], [685, 310, 20, 36, "#ffb8b8", 0.5], [610, 262, 34, 24, "#ffc8c8", 0.6], [730, 140, 60, 24, "#ffe4e4", 0.6],
  [667, 262, 18, 14, "#ffc0c0", 0.5], [720, 415, 50, 26, "#ffdada", 0.6], [804, 458, 14, 16, "#ff5050", 0.8], [790, 467, 8, 9, "#4040ff", 0.7],
  [765, 445, 12, 10, "#c0c0ff", 0.7], [600, 412, 24, 22, "#e0e0ff", 0.8], [710, 330, 12, 24, "#dcdcff", 0.6], [780, 320, 26, 40, "#f0f0ff", 0.8],
];

function SplinesWeights() {
  const barA: Box = [69, 534, 406, 551];
  const barB: Box = [474, 534, 811, 551];
  return (
    <Figure name="Weighted spline velocity" x={-108} y={-81}>
      <Clip id="unc-clip" box={[69, 66, 406, 503]}>
        <rect x={69} y={66} width={337} height={437} fill="#808080" />
        <polygon points={pts(COAST)} fill="#87ceeb" />
        <Cells layer={STATIONS_BIG} />
      </Clip>
      <Axes box={[69, 66, 406, 503]} size={16} title="Data uncertainty" titleSize={19} xt={[[79, "124°W"], [225, "120°W"], [371, "116°W"]]} yt={[[110, "41°N"], [206, "39°N"], [298, "37°N"], [387, "35°N"], [475, "33°N"]]} />
      <Bar id="bar-su" map={MAGMA} box={barA} />
      <Axes box={barA} size={15} xt={[[173, "1"], [223, "2"], [262, "3"], [292, "4"], [319, "5"], [345, "6"], [367, "7"], [388, "8"]]} />
      <Label x={238} y={594} size={16}>uncertainty [mm/yr]</Label>

      <Clip id="vel-clip" box={[474, 66, 811, 503]}>
        <rect x={474} y={66} width={337} height={437} fill="#fdfbfd" />
        <defs>
          {BLOBS.map((b, i) => (
            <radialGradient key={i} id={`blob-${i}`}>
              <stop offset="0" stopColor={b[4]} stopOpacity={b[5]} />
              <stop offset="0.4" stopColor={b[4]} stopOpacity={b[5] * 0.75} />
              <stop offset="0.7" stopColor={b[4]} stopOpacity={b[5] * 0.22} />
              <stop offset="1" stopColor={b[4]} stopOpacity={0} />
            </radialGradient>
          ))}
        </defs>
        {BLOBS.map((b, i) => (
          <ellipse key={i} cx={b[0]} cy={b[1]} rx={b[2] * 1.4} ry={b[3] * 1.4} fill={`url(#blob-${i})`} />
        ))}
        <path d="M811 66h-132q4 14-4 20-18 12-10 18 10 6 5 20 30 4 60 0 20-4 36-20 20-14 34-4 8 6 11 12zM811 205q-30-6-50-3-24 2-30 12 0 14-10 18-20 6-16 18 30 20 54 28 20-4 36 22 6 12 16 6z" fill="#808080" />
        <circle cx={727} cy={89} r={20} fill="#fbfbff" />
        <circle cx={733} cy={246} r={20} fill="#f6f6ff" />
        <path d="M474 215q20 10 26 20 2 40 22 54 20 14 24 36 14 18 24 24 0 26 16 36 8 20 0 40 14 20 44 22 4 14 0 30 20 6 45 1 30-14 44-2 4 20 20 27H474z" fill="#87ceeb" />
        <Cells layer={SPECKS} />
        <path d="M474 150l15 20 5 38 43 52 3 20 22 42 40 60 3 24 15 5 42 5 25 14 15 3 26 28 5 40" fill="none" stroke="#333" strokeWidth={1.8} />
        <path d="M740 158h14M698 160l8-3M630 234l14 3M684 428l8 10 12-4-8 8" stroke="#222" strokeWidth={1.4} fill="none" />
      </Clip>
      <Axes box={[474, 66, 811, 503]} size={16} title="Weighted spline interpolated velocity" titleSize={18} xt={[[484, "124°W"], [630, "120°W"], [776, "116°W"]]} yt={[[110, "41°N"], [206, "39°N"], [298, "37°N"], [387, "35°N"], [475, "33°N"]]} />
      <Bar id="bar-sv" map={SEISMIC} box={barB} />
      <Axes box={barB} size={15} xt={[[514, "−40"], [578, "−20"], [642, "0"], [707, "20"], [771, "40"]]} />
      <Label x={642} y={594} size={16}>vertical velocity [mm/yr]</Label>
    </Figure>
  );
}

/* ---------- Texas ---------- */

const TEXAS: Pt[] = [[237, 40], [237, 82], [248, 82], [248, 95], [260, 97], [260, 109], [248, 111], [248, 151], [260, 152], [260, 166], [284, 167], [284, 180], [272, 181], [272, 222], [260, 223], [260, 236], [237, 238], [237, 264], [225, 265], [225, 278], [201, 278], [201, 264], [178, 264], [155, 265], [155, 278], [131, 278], [131, 264], [80, 264], [80, 345], [130, 345], [131, 321], [143, 321], [143, 334], [155, 334], [155, 345], [178, 346], [178, 373], [166, 374], [166, 400], [155, 401], [155, 440], [166, 441], [178, 467], [213, 467], [214, 455], [225, 454], [226, 440], [237, 439], [237, 415], [261, 415], [272, 440], [319, 441], [320, 468], [332, 470], [332, 481], [355, 494], [356, 507], [368, 509], [368, 533], [390, 535], [391, 570], [403, 573], [403, 598], [425, 600], [440, 612], [440, 640], [569, 640], [569, 586], [557, 585], [557, 573], [534, 572], [534, 561], [557, 560], [557, 547], [569, 546], [581, 534], [581, 522], [639, 521], [640, 496], [663, 494], [663, 482], [675, 470], [687, 456], [693, 440], [730, 430], [730, 240], [693, 237], [686, 222], [686, 208], [663, 207], [663, 182], [640, 180], [640, 166], [569, 166], [569, 152], [546, 152], [546, 166], [510, 166], [509, 152], [486, 152], [485, 138], [450, 138], [450, 124], [426, 124], [426, 137], [413, 137], [413, 124], [390, 123], [390, 110], [415, 109], [415, 96], [427, 95], [427, 68], [415, 67], [415, 40]];
const HOLE: Pt[] = [[356, 195], [413, 195], [414, 208], [427, 208], [427, 236], [392, 236], [392, 222], [368, 221], [368, 209], [356, 208]];
const inTexas = (x: number, y: number) => inside(x, y, TEXAS) && !inside(x, y, HOLE) && !(x > 189 && x < 201 && y > 333 && y < 346);

const TEMPS: [number, number, number][] = [
  [245, 55, 0.0], [255, 140, 0.04], [300, 100, 0.08], [300, 50, 0.05], [320, 160, 0.08], [400, 60, 0.14], [340, 90, 0.22], [380, 110, 0.22], [250, 290, 0.2], [120, 290, 0.22], [210, 380, 0.2], [210, 330, 0.2], [280, 240, 0.16], [330, 220, 0.28],
  [190, 440, 0.6], [250, 410, 0.48], [400, 180, 0.36], [470, 180, 0.4], [560, 200, 0.44], [620, 200, 0.33], [640, 260, 0.42], [480, 240, 0.38], [400, 260, 0.4], [575, 255, 0.32], [300, 330, 0.38], [370, 370, 0.4], [380, 310, 0.42],
  [505, 325, 0.38], [540, 360, 0.44], [490, 410, 0.38], [290, 425, 0.6], [400, 460, 0.68], [350, 440, 0.68], [420, 390, 0.52], [450, 500, 0.68], [500, 470, 0.66], [380, 500, 0.74], [430, 580, 0.8], [500, 600, 0.9],
  [545, 605, 0.97], [580, 500, 0.8], [620, 490, 0.85], [650, 470, 0.87], [680, 430, 0.83], [690, 370, 0.62], [600, 400, 0.6], [600, 330, 0.5], [560, 440, 0.66], [660, 300, 0.46], [410, 200, 0.38], [340, 270, 0.34],
];

function temperature(smooth: boolean) {
  const out: Layer = {};
  const power = smooth ? 1.15 : 1.5;
  for (let y = 45; y < 619; y += 13.37)
    for (let x = 102; x < 692; x += 11.8) {
      const cx = x + 5.9;
      const cy = y + 6.7;
      if (!inTexas(cx, cy)) continue;
      let s = 0;
      let w = 0;
      for (const [px, py, t] of TEMPS) {
        const q = 1 / ((cx - px) ** 2 + (cy - py) ** 2 + (smooth ? 900 : 120)) ** (power + 0.4);
        s += q * t;
        w += q;
      }
      const hot = Math.exp(-((cx - 447) ** 2 + (cy - 307) ** 2) / (smooth ? 1200 : 420)) * (smooth ? 0.24 : 0.36);
      addCell(out, color(PLASMA, s / w + hot), x, y, 11.9, 13.5);
    }
  return out;
}
const TEMP_SHARP = temperature(false);
const TEMP_SMOOTH = temperature(true);

const SITES: Pt[] = (() => {
  const r = rng(31);
  const out: Pt[] = [[59, 175], [90, 175], [113, 174], [99, 224], [106, 208], [111, 208], [115, 185], [122, 177], [127, 196], [141, 216], [132, 157], [148, 155], [135, 164], [141, 171], [155, 165], [148, 133], [145, 120], [152, 121], [138, 104], [149, 96], [170, 68], [137, 79], [147, 77], [156, 84], [164, 84], [165, 87], [178, 79], [178, 115], [198, 120], [214, 124], [214, 130], [165, 155], [173, 160], [183, 160], [190, 162], [174, 186], [173, 204], [163, 213], [166, 229], [171, 229], [179, 241], [188, 247], [186, 254], [195, 268], [200, 246], [208, 160], [233, 300], [226, 299], [221, 298], [230, 296], [235, 305], [204, 174], [300, 160], [294, 172], [304, 216]];
  const add = (x: number, y: number) => {
    if (x < 306 && y < 304 && x + (y - 130) * 0.1 > 165 && y - 225 < (300 - x) * 0.9) out.push([x, y]);
  };
  for (let i = 0; i < 34; i++) add(243 + gauss(r) * 11, 149 + gauss(r) * 9);
  for (let i = 0; i < 64; i++) add(192 + r() * 108, 138 + r() * 74);
  for (let i = 0; i < 30; i++) add(221 + gauss(r) * 10, 206 + gauss(r) * 16);
  for (let i = 0; i < 32; i++) add(268 + gauss(r) * 14, 224 + gauss(r) * 11);
  for (let i = 0; i < 18; i++) add(230 + gauss(r) * 9, 266 + gauss(r) * 6);
  for (let i = 0; i < 12; i++) add(195 + r() * 50, 225 + r() * 30);
  return out;
})();

const BORDER = "M60 290L102 318L120 335L165 370L178 395L190 425L215 443L256 459L287 415L322 415L357 437L377 465L397 505L425 535L433 567L448 596L505 618L527 622";
const STATES = "M261 20V295H102M261 41H401V150L425 158L450 170L500 183L530 195L550 190L600 192L650 188L682 205L684 290L693 340L692 420M655 -20L656 41L662 80L660 190M684 240H770M656 41H770";
const SHORE = "M760 420L693 422L650 440L600 475L560 490L532 520L526 560L530 625";

function TexasLines({ width = 1.5 }: { width?: number }) {
  return (
    <g fill="none" strokeWidth={width}>
      <path d={STATES} stroke="#000" strokeOpacity={0.25} />
      <path d={SHORE} stroke="#000" strokeOpacity={0.25} />
      <path d={BORDER} stroke="#000" strokeOpacity={0.65} />
    </g>
  );
}
const SEA_TX = "M780 422L693 422L650 440L600 475L560 490L532 520L526 560L532 640H780z";

const SITE_SPECKS: Layer = (() => {
  const out: Layer = {};
  SITES.forEach(([x, y]) => addDot(out, "#1a1a1a", 121 + (x - 67) / 0.4138, 69 + (y - 77) / 0.417, 1.4));
  return out;
})();

function Splines({ cv }: { cv?: boolean }) {
  const box: Box = [102, 45, 693, 620];
  const bar: Box = [733, 45, 760, 620];
  const ticks: Tick[] = cv
    ? [[67, "22.5"], [134, "20.0"], [202, "17.5"], [269, "15.0"], [337, "12.5"], [405, "10.0"], [473, "7.5"], [540, "5.0"], [608, "2.5"]]
    : [[150, "20"], [277, "15"], [403, "10"], [530, "5"]];
  const key = cv ? "cv" : "sp";
  return (
    <Figure name={cv ? "Cross-validated air temperature grid" : "Air temperature grid"} x={cv ? -86 : -84} y={-81}>
      <Clip id={`clip-${key}`} box={box}>
        <rect x={102} y={45} width={591} height={575} fill="#dcdcdc" />
        <path d={SEA_TX} fill="#fff" />
        <Cells layer={cv ? TEMP_SMOOTH : TEMP_SHARP} crisp />
        <TexasLines />
        <Cells layer={SITE_SPECKS} />
      </Clip>
      <Axes box={box} size={17} xt={[[121, "106°W"], [262, "103°W"], [402, "100°W"], [543, "97°W"], [684, "94°W"]]} yt={[[69, "36°N"], [240, "33°N"], [404, "30°N"], [563, "27°N"]]} />
      <Label x={397} y={669} size={17}>longitude</Label>
      <Label x={34} y={334} size={17} turn>latitude</Label>
      <Bar id={`bar-${key}`} map={PLASMA} box={bar} vertical />
      <Axes box={bar} size={17} right yt={ticks} />
      <Label x={cv ? 829 : 813} y={332} size={17} turn>Air temperature (C)</Label>
    </Figure>
  );
}

function siteDots(kind: "data" | "trend" | "residual") {
  const r = rng(kind.length);
  const out: Layer = {};
  for (const [x, y] of SITES) {
    let c: string;
    if (kind === "residual") {
      c = x < 120 && y > 200 && y < 215 ? "#7070ff" : color(SEISMIC, 0.5 + gauss(r) * 0.045);
      if (x === 204 && y === 174) c = "#e00000";
    } else {
      const t = (y - 60) * 0.0042 + (x - 60) * 0.0006 + (kind === "data" ? gauss(r) * 0.02 : 0);
      c = color([[255, 170, 170], [255, 60, 60], [245, 0, 0], [200, 0, 0], [130, 0, 0]], t * 0.86);
    }
    addDot(out, c, x, y, 4.5);
  }
  return out;
}
const SITE_DATA = siteDots("data");
const SITE_TREND = siteDots("trend");
const SITE_RES = siteDots("residual");

function TexasPanel({ id, title, layer }: { id: string; title: string; layer: Layer }) {
  const box: Box = [48, 53, 322, 316];
  return (
    <g>
      <Clip id={id} box={box}>
        <rect x={48} y={53} width={274} height={263} fill="#dcdcdc" />
        <g transform="translate(16.9 48.2) scale(.4138 .417)">
          <path d={SEA_TX} fill="#fff" />
          <TexasLines width={3} />
        </g>
        <Cells layer={layer} />
      </Clip>
      <Axes box={box} size={12} tickGap={3} title={title} titleSize={13} xt={[[67, "106°W"], [126, "103°W"], [184, "100°W"], [242, "97°W"], [301, "94°W"]]} yt={[[78, "36°N"], [149, "33°N"], [217, "30°N"], [283, "27°N"]]} />
    </g>
  );
}

const HIST_BLUE = [5, 6, 8, 19, 45, 34, 20, 32, 8, 7, 2];
const HIST_ORANGE = [1, 2, 3, 8, 15, 27, 36, 34, 24, 18, 14, 1, 1];

function PolynomialTrend() {
  const bar: Box = [223, 375, 301, 384];
  return (
    <Figure name="Polynomial trend of air temperature" x={-192} y={-72}>
      <TexasPanel id="tx-a" title="Original data" layer={SITE_DATA} />
      <g transform="translate(333 0)">
        <TexasPanel id="tx-b" title="Regional trend" layer={SITE_TREND} />
      </g>
      <g transform="translate(0 314)">
        <TexasPanel id="tx-c" title="Residual" layer={SITE_RES} />
      </g>
      <Bar id="bar-res" map={SEISMIC} box={bar} />
      <Axes box={bar} size={12} tickGap={2} xt={[[229, "−20"], [262, "0"], [295, "20"]]} />
      <Label x={262} y={414} size={12}>C</Label>
      {HIST_BLUE.map((h, i) => (
        <rect key={i} x={457 + i * 16.8} y={629 - h * 5.53} width={17} height={h * 5.53} fill="#629fca" shapeRendering="crispEdges" />
      ))}
      {HIST_ORANGE.map((h, i) => (
        <rect key={i} x={390 + i * 6.4} y={629 - h * 5.53} width={6.6} height={h * 5.53} fill="#ff7f0e" fillOpacity={0.7} shapeRendering="crispEdges" />
      ))}
      <rect x={513} y={623} width={7} height={6} fill="#b07030" />
      <rect x={384} y={373} width={112} height={40} rx={3} fill="#fff" stroke="#ddd" />
      <rect x={388} y={379} width={22} height={7} fill="#629fca" />
      <rect x={388} y={394} width={22} height={7} fill="#ffa556" />
      <Label x={418} y={387} size={11} anchor="start">Original data</Label>
      <Label x={418} y={402} size={11} anchor="start">Residuals</Label>
      <Axes box={[380, 367, 656, 629]} size={12} tickGap={3} title="Distribution of data" titleSize={13} xt={[[392, "−5"], [437, "0"], [481, "5"], [526, "10"], [570, "15"], [614, "20"]]} yt={[[629, "0"], [574, "10"], [519, "20"], [464, "30"], [408, "40"]]} />
      <Label x={517} y={661} size={11}>Air temperature (C)</Label>
    </Figure>
  );
}

/* ---------- vector trends ---------- */

function trendField(north: boolean) {
  const out: Layer = {};
  for (let y = 76; y < 512; y += 6)
    for (let x = 61; x < 398; x += 6) {
      const a = 399 - x + (y - 240);
      const top = Math.max(0, (240 - y) / 164);
      let v = 0.8 * Math.max(0, a / 610) ** 1.6 + top * top * 0.14 * (0.6 + (x - 61) / 600);
      v -= 0.05 * Math.exp(-((x - 410) ** 2 + (y - 270) ** 2) / 5000);
      if (north) v = v * 1.06;
      addCell(out, color(SEISMIC, 0.5 + (north ? v : -v) / 2), x, y, 6, 6);
    }
  return out;
}
const EAST = trendField(false);
const NORTH = trendField(true);

const MOTION = (() => {
  const r = rng(17);
  let thin = "";
  let bold = "";
  const line: Pt[] = [[64, 110], [75, 165], [110, 225], [150, 290], [195, 350], [240, 395], [290, 425], [340, 455], [375, 485]];
  for (let i = 0; i < 330; i++) {
    const t = r();
    const p = along(line, t);
    const off = gauss(r) * 13;
    const x = p[0] + off + 3;
    const y = p[1] + gauss(r) * 13;
    const l = 26 + r() * 24 - off * 0.5;
    bold += `M${n1(x)} ${n1(y)}l${n1(-l * 0.56)} ${n1(-l * 0.83)}`;
  }
  for (let i = 0; i < 170; i++) {
    const x = 272 + gauss(r) * 24;
    const y = 420 + gauss(r) * 13 + (x - 272) * 0.5;
    bold += `M${n1(x)} ${n1(y)}l-26 -30`;
  }
  for (let i = 0; i < 420; i++) {
    const x = 66 + r() * 330;
    const y = 80 + r() * 420;
    const near = x - 61 - (y - 150) * 0.75;
    if (near < -14) continue;
    const l = Math.max(3, 30 - near * 0.13);
    if (l < 5 && r() < 0.4) continue;
    thin += `M${n1(x)} ${n1(y)}l${n1(-l * 0.52)} ${n1(-l * 0.8)}`;
  }
  for (let i = 0; i < 30; i++) {
    const x = 257 + gauss(r) * 9;
    thin += `M${n1(x)} ${n1(270 + (x - 257) * 1.2 + gauss(r) * 6)}l-8 -14`;
  }
  for (let i = 0; i < 60; i++) {
    const p: Pt = [300 + gauss(r) * 40, 390 + gauss(r) * 22];
    thin += `M${n1(p[0])} ${n1(p[1])}l-14 -22`;
  }
  for (let i = 0; i < 55; i++) {
    const p = along([[85, 200], [120, 300], [190, 400], [250, 450]], r());
    thin += `M${n1(p[0] + 22)} ${n1(p[1] + 20 + gauss(r) * 10)}l-34 -52`;
  }
  return { thin, bold };
})();

function TrendPanel({ id, title, layer, ticks, legend }: { id: string; title: string; layer: Layer; ticks: Tick[]; legend?: boolean }) {
  const box: Box = [61, 76, 399, 513];
  const bar: Box = [61, 544, 399, 560];
  return (
    <g>
      <Clip id={`${id}-clip`} box={box}>
        <Cells layer={layer} crisp />
        <path d={MOTION.thin} stroke="#000" strokeOpacity={0.5} strokeWidth={1.3} />
        <path d={MOTION.bold} stroke="#000" strokeOpacity={0.72} strokeWidth={1.6} />
        <path d="M61 155l15 25 4 25 45 60 2 25 25 45 38 45 5 32 14 6 31 5 32 20 14 12 20 15 20 45" fill="none" stroke="#d0d0d0" strokeWidth={2.2} />
        <path d="M152 130l8 13M170 154l9 12" stroke="#000" strokeWidth={3.5} />
      </Clip>
      {legend && (
        <g>
          <rect x={67} y={480} width={150} height={27} rx={3} fill="#fff" fillOpacity={0.85} stroke="#ccc" />
          <rect x={74} y={487} width={28} height={11} fill="#000" />
          <Label x={114} y={498} size={15} anchor="start">Original data</Label>
        </g>
      )}
      <Axes box={box} size={16} title={title} titleSize={18} xt={[[71, "124°W"], [217, "120°W"], [363, "116°W"]]} yt={[[119, "41°N"], [215, "39°N"], [307, "37°N"], [397, "35°N"], [484, "33°N"]]} />
      <Bar id={`${id}-bar`} map={SEISMIC} box={bar} />
      <Axes box={bar} size={15} xt={ticks} />
      <Label x={229} y={602} size={16}>meters/year</Label>
    </g>
  );
}

function VectorTrends() {
  return (
    <Figure name="Trends of east and north components" x={-114} y={-72}>
      <TrendPanel id="east" title="East component trend" layer={EAST} legend ticks={[[144, "−0.05"], [229, "0.00"], [314, "0.05"]]} />
      <g transform="translate(406 0)">
        <TrendPanel id="north" title="North component trend" layer={NORTH} ticks={[[92, "−0.10"], [160, "−0.05"], [229, "0.00"], [298, "0.05"], [367, "0.10"]]} />
      </g>
    </Figure>
  );
}

const WIND: [number, number, number, number][] = [
  [290, 110, -12, 36], [230, 110, -8, 36], [370, 130, -2, 30], [230, 190, -14, 30], [300, 180, -14, 30], [280, 240, -22, 20], [340, 190, -10, 14], [150, 300, -22, 22], [200, 290, -20, 16], [100, 310, 0, 22], [160, 430, 0, 26], [200, 400, -4, 24],
  [250, 300, -5, 3], [330, 300, 3, 3], [400, 300, 4, 4], [330, 360, 3, 5], [260, 380, 3, 8], [400, 200, 6, 8], [430, 240, 6, 10], [540, 210, 24, 14], [480, 260, 22, 20], [600, 240, 24, 6], [560, 300, 26, 0], [600, 295, 22, -2], [480, 320, 22, -6],
  [410, 340, 8, 12], [560, 390, 12, -30], [625, 390, 16, -28], [480, 490, 14, -36], [430, 430, 22, -16], [370, 480, 14, -4], [370, 560, 0, 30], [400, 530, 14, -12], [440, 570, 3, -26], [560, 470, 34, -28], [600, 440, 30, -28], [500, 590, 30, -6], [490, 400, 18, -24], [320, 440, 5, 22],
];

function windAt(x: number, y: number): Pt {
  let a = 0;
  let b = 0;
  let w = 0;
  for (const [px, py, u, v] of WIND) {
    const q = 1 / ((x - px) ** 2 + (y - py) ** 2 + 150) ** 1.6;
    a += q * u;
    b += q * v;
    w += q;
  }
  return [a / w, b / w];
}

function arrow(x: number, y: number, u: number, v: number, k: number) {
  const ex = x + u;
  const ey = y + v;
  const l = Math.hypot(u, v) || 1;
  const ux = (u / l) * k;
  const uy = (v / l) * k;
  return `M${n1(x)} ${n1(y)}L${n1(ex)} ${n1(ey)}M${n1(ex - ux - uy * 0.6)} ${n1(ey - uy + ux * 0.6)}L${n1(ex)} ${n1(ey)}L${n1(ex - ux + uy * 0.6)} ${n1(ey - uy - ux * 0.6)}`;
}

const BREEZE = (() => {
  let d = "";
  for (let y = 92; y < 606; y += 11.6)
    for (let x = 82; x < 645; x += 14.6) {
      const tx = 121 + (x - 111) / 0.879;
      const ty = 69 + (y - 115) / 0.8806;
      if (!inTexas(tx, ty + 12) || (tx > 700 && ty < 400)) continue;
      const [u, v] = windAt(x, y);
      const k = x > 450 || y < 260 || y > 440 || x < 220 ? 0.9 : 0.7;
      d += arrow(x, y, u * k, v * k, 3);
    }
  return d;
})();

const GUSTS = (() => {
  const r = rng(55);
  let d = "";
  SITES.forEach(([sx, sy], i) => {
    if (i % 4 === 2) return;
    const x = 111 + ((sx - 67) / 0.4138) * 0.879;
    const y = 115 + ((sy - 77) / 0.417) * 0.8806;
    const [u, v] = windAt(x, y);
    const k = 0.45 + r() * 0.6;
    d += arrow(x - u * 0.5, y - v * 0.5, u * k + gauss(r) * 2, v * k + gauss(r) * 2, 4.5);
  });
  return d;
})();

function Vectors2D() {
  const box: Box = [70, 64, 649, 619];
  return (
    <Figure name="Wind speed vectors" x={-186} y={-72}>
      <Clip id="wind-clip" box={box}>
        <rect x={70} y={64} width={579} height={555} fill="#dcdcdc" />
        <g transform="translate(4.6 54.2) scale(.879 .8806)">
          <path d={SEA_TX} fill="#fff" />
          <TexasLines width={1.8} />
        </g>
        <path d={BREEZE} fill="none" stroke="#4f9bd0" strokeOpacity={0.8} strokeWidth={1.6} />
        <path d={GUSTS} fill="none" stroke="#e31a1c" strokeOpacity={0.9} strokeWidth={2} />
      </Clip>
      <Label x={71} y={523} size={17} anchor="start">5 knots</Label>
      <path d={arrow(90, 539, 28, 0, 3)} stroke="#4f9bd0" strokeWidth={1.4} fill="none" />
      <rect x={79} y={554} width={167} height={57} rx={3} fill="#fff" fillOpacity={0.9} stroke="#ddd" />
      <rect x={87} y={562} width={32} height={12} fill="#1f78b4" />
      <rect x={87} y={588} width={32} height={12} fill="#e31a1c" />
      <Label x={134} y={574} size={17} anchor="start">Interpolated</Label>
      <Label x={134} y={600} size={17} anchor="start">Original</Label>
      <Axes box={box} size={17} title="Uncoupled spline gridding of wind speed" titleSize={21} xt={[[111, "106°W"], [235, "103°W"], [359, "100°W"], [483, "97°W"], [607, "94°W"]]} yt={[[116, "36°N"], [266, "33°N"], [410, "30°N"], [551, "27°N"]]} />
    </Figure>
  );
}

/* ---------- page ---------- */

const EXAMPLES: { title: string; figure: React.ReactNode }[] = [
  { title: "Blocked reduction operations", figure: <BlockedReduction /> },
  { title: "Using weights in blocked reduction", figure: <WeightsReduction /> },
  { title: "Using weights in blocked means", figure: <WeightsMeans /> },
  { title: "Mask grid points by distance", figure: <MaskDistance /> },
  { title: "Gridding with Scipy", figure: <GriddingScipy /> },
  { title: "Gridding with splines", figure: <Splines /> },
  { title: "Gridding with splines (cross-validated)", figure: <Splines cv /> },
  { title: "Gridding with splines and weights", figure: <SplinesWeights /> },
  { title: "Polynomial trend", figure: <PolynomialTrend /> },
  { title: "Trends in vector data", figure: <VectorTrends /> },
  { title: "Gridding 2D vectors", figure: <Vectors2D /> },
];

export default function App() {
  return (
    <main className="bg-white pt-[25px] pr-[3px] pb-10 pl-[41px] font-['Open_Sans',sans-serif] text-[#404040]">
      <h1 className="text-[71px] leading-[72px] font-light">Gallery</h1>
      <p className="mt-[72px] text-[36px] leading-[53px]">This gallery contains a selection examples of what Verde can do.</p>
      <div className="mt-[88px] grid grid-cols-4 gap-y-[115px]">
        {EXAMPLES.map((e) => (
          <a key={e.title} href="#" className="block px-[35px] text-[#9b59b6]">
            {e.figure}
            <span className="mt-8 block text-[36px] leading-[53px]">{e.title}</span>
          </a>
        ))}
      </div>
    </main>
  );
}
